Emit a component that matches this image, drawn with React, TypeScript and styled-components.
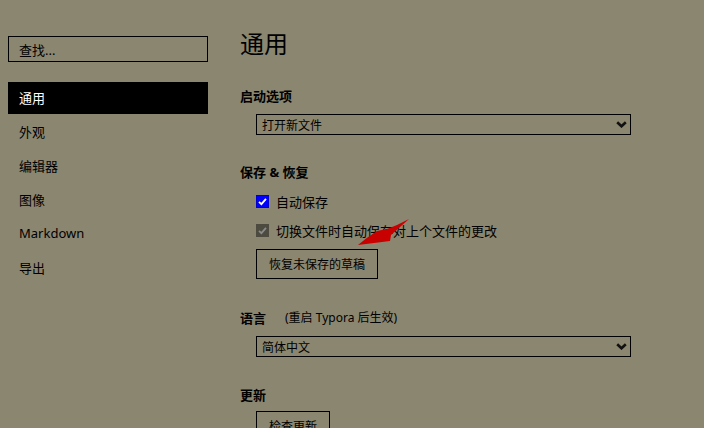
import styled, { createGlobalStyle } from 'styled-components';

const GlobalStyle = createGlobalStyle`
  html, body {
    margin: 0;
    padding: 0;
    background: #8b8670;
  }
  body {
    font-family: 'Noto Sans', 'Noto Sans CJK SC', sans-serif;
    color: #000;
  }
  * {
    box-sizing: border-box;
  }
`;

const NAV_ITEMS = ['通用', '外观', '编辑器', '图像', 'Markdown', '导出'];

const Chevron = () => (
  <svg width="11" height="7" viewBox="0 0 11 7">
    <path d="M1.2 1.2 L5.5 5.3 L9.8 1.2" fill="none" stroke="#111" strokeWidth="2.6" />
  </svg>
);

const CheckMark = ({ color }: { color: string }) => (
  <svg width="11" height="11" viewBox="0 0 11 11">
    <path d="M2 5.8 L4.4 8.2 L9 2.8" fill="none" stroke={color} strokeWidth="1.8" />
  </svg>
);

interface CheckProps {
  label:     string;
  disabled?: boolean;
}

const CheckRow = ({ label, disabled }: CheckProps) => (
  <StyledCheckRow>
    <StyledCheckBox $disabled={disabled}>
      <CheckMark color={disabled ? '#8a8a8a' : '#fff'} />
    </StyledCheckBox>
    <span>{label}</span>
  </StyledCheckRow>
);

const App = () => {
  return (
    <>
      <GlobalStyle />
      <StyledPage>
        <StyledSidebar>
          <StyledSearch>查找...</StyledSearch>
          <StyledNav>
            {NAV_ITEMS.map((item, i) => (
              <StyledNavItem key={item} $active={i === 0}>
                {item}
              </StyledNavItem>
            ))}
          </StyledNav>
        </StyledSidebar>

        <StyledMain>
          <StyledTitle>通用</StyledTitle>

          <StyledSection $mt={25}>
            <StyledHeading>启动选项</StyledHeading>
            <StyledBody>
              <StyledSelect>
                <span>打开新文件</span>
                <Chevron />
              </StyledSelect>
            </StyledBody>
          </StyledSection>

          <StyledSection $mt={26}>
            <StyledHeading>保存 &amp; 恢复</StyledHeading>
            <StyledBody $gap={9} $top={10}>
              <CheckRow label="自动保存" />
              <CheckRow label="切换文件时自动保存对上个文件的更改" disabled />
              <StyledButton>恢复未保存的草稿</StyledButton>
            </StyledBody>
          </StyledSection>

          <StyledSection $mt={28}>
            <StyledHeading>
              语言
              <StyledNote>(重启 Typora 后生效)</StyledNote>
            </StyledHeading>
            <StyledBody>
              <StyledSelect>
                <span>简体中文</span>
                <Chevron />
              </StyledSelect>
            </StyledBody>
          </StyledSection>

          <StyledSection $mt={27}>
            <StyledHeading>更新</StyledHeading>
            <StyledBody $top={7}>
              <StyledButton>检查更新</StyledButton>
            </StyledBody>
          </StyledSection>

          <StyledArrow width="64" height="40" viewBox="0 0 64 40">
            <path
              d="M59 9 Q48 15 37 19 L27 21 Q16 28 8 35 Q24 33 40 31 L41 25 Q50 17 59 9 Z"
              fill="#c80000"
            />
          </StyledArrow>
        </StyledMain>
      </StyledPage>
    </>
  );
};

export default App;

const StyledPage = styled.div`
  display: flex;
  width: 704px;
  height: 428px;
  overflow: hidden;
`;

const StyledSidebar = styled.div`
  width: 216px;
  flex-shrink: 0;
  padding: 36px 8px 0 8px;
`;

const StyledSearch = styled.div`
  height: 26px;
  display: flex;
  align-items: center;
  padding-left: 10px;
  font-size: 13px;
  border: 1px solid #000;
`;

const StyledNav = styled.ul`
  list-style: none;
  margin: 20px 0 0;
  padding: 0;
`;

const StyledNavItem = styled.li<{ $active: boolean }>`
  height: 32px;
  margin-bottom: 2px;
  display: flex;
  align-items: center;
  padding: 0 0 2px 11px;
  font-size: 13px;
  color: ${({ $active }) => ($active ? '#fff' : '#000')};
  background: ${({ $active }) => ($active ? '#000' : 'transparent')};
`;

const StyledMain = styled.div`
  position: relative;
  flex: 1;
  padding: 28px 0 0 24px;
`;

const StyledTitle = styled.h1`
  margin: 0;
  font-size: 24px;
  line-height: 32px;
  font-weight: 400;
`;

const StyledSection = styled.section<{ $mt: number }>`
  margin-top: ${({ $mt }) => $mt}px;
`;

const StyledHeading = styled.h2`
  margin: 0;
  display: flex;
  align-items: center;
  height: 20px;
  font-size: 13px;
  font-weight: 700;
`;

const StyledNote = styled.span`
  margin-left: 19px;
  font-size: 12px;
  font-weight: 400;
`;

const StyledBody = styled.div<{ $gap?: number; $top?: number }>`
  display: flex;
  flex-direction: column;
  align-items: flex-start;
  gap: ${({ $gap }) => $gap ?? 9}px;
  margin-top: ${({ $top }) => $top ?? 9}px;
  padding-left: 16px;
`;

const StyledSelect = styled.div`
  width: 375px;
  height: 21px;
  display: flex;
  align-items: center;
  justify-content: space-between;
  padding: 0 3px 0 5px;
  font-size: 12px;
  border: 1px solid #000;
`;

const StyledCheckRow = styled.label`
  display: flex;
  align-items: center;
  gap: 7px;
  height: 20px;
  font-size: 13px;
`;

const StyledCheckBox = styled.span<{ $disabled?: boolean }>`
  width: 13px;
  height: 13px;
  display: flex;
  align-items: center;
  justify-content: center;
  background: ${({ $disabled }) => ($disabled ? '#4d4a40' : '#0000ff')};
  border: 1px solid ${({ $disabled }) => ($disabled ? '#4d4a40' : '#0000cc')};
`;

const StyledButton = styled.button`
  height: 30px;
  padding: 0 12px;
  font-family: 'Noto Sans', 'Noto Sans CJK SC', sans-serif;
  font-size: 12px;
  color: #000;
  background: transparent;
  border: 1px solid #000;
`;

const StyledArrow = styled.svg`
  position: absolute;
  left: 134px;
  top: 210px;
`;
